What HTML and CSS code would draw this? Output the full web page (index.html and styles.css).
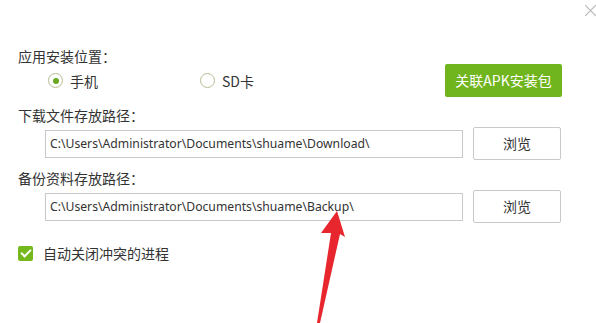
FILE: index.html
```html
<!DOCTYPE html>
<html>
<head>
<meta charset="utf-8">
<title>设置</title>
<link rel="stylesheet" href="styles.css">
</head>
<body>
<div class="dlg">
  <span class="close"></span>

  <div class="lbl lbl-first">应用安装位置：</div>
  <div class="radios">
    <span class="opt"><i class="radio on"></i>手机</span>
    <span class="opt"><i class="radio"></i>SD卡</span>
    <a class="btn-green">关联APK安装包</a>
  </div>

  <div class="lbl">下载文件存放路径：</div>
  <div class="pathrow">
    <div class="path">C:\Users\Administrator\Documents\shuame\Download\</div>
    <a class="btn">浏览</a>
  </div>

  <div class="lbl">备份资料存放路径：</div>
  <div class="pathrow">
    <div class="path">C:\Users\Administrator\Documents\shuame\Backup\</div>
    <a class="btn">浏览</a>
  </div>

  <div class="check"><i class="box"></i>自动关闭冲突的进程</div>

  <svg class="arrow" width="596" height="323" viewBox="0 0 596 323">
    <polygon points="337,211 345,237 340,234 320,323 317,323 331,233 321,233" fill="#e8262e"/>
  </svg>
</div>
</body>
</html>
```

FILE: styles.css
```css
*{
	margin:0;
	padding:0;}
body{
	background:#fff;
	font-family:"Noto Sans","Noto Sans CJK SC",sans-serif;
	color:#333;
	font-size:14px;}
	.dlg{
		position:relative;
		width:596px;
		height:323px;
		padding:0 34px 0 18px;
		box-sizing:border-box;
		overflow:hidden;}
		.close{
			position:absolute;
			right:-1px;
			top:5px;
			width:12px;
			height:12px;}
		.close:before,.close:after{
			content:"";
			position:absolute;
			left:5px;
			top:-2px;
			width:1px;
			height:15px;
			background:#b5b5b5;
			transform:rotate(45deg);}
		.close:after{
			transform:rotate(-45deg);}
	.lbl{
		line-height:16px;
		height:16px;
		margin-top:10px;
		font-family:"Noto Sans CJK SC",sans-serif;}
	.lbl-first{
		margin-top:48px;}
	.radios{
		display:flex;
		align-items:center;
		height:33px;
		padding-left:30px;}
		.opt{
			display:flex;
			align-items:center;
			width:152px;
			font-family:"Noto Sans CJK SC",sans-serif;}
		.radio{
			width:13px;
			height:13px;
			border:1px solid #b4bd92;
			border-radius:50%;
			margin-right:7px;
			position:relative;}
		.radio.on:after{
			content:"";
			position:absolute;
			left:3.5px;
			top:3.5px;
			width:6px;
			height:6px;
			border-radius:50%;
			background:#69a81e;}
		.btn-green{
			margin-left:auto;
			width:117px;
			height:33px;
			line-height:33px;
			text-align:center;
			background:#70b51d;
			color:#fff;
			font-size:14px;
			border-radius:2px;
			font-family:"Noto Sans CJK SC",sans-serif;}
	.pathrow{
		display:flex;
		align-items:center;
		height:33px;
		margin-top:4px;
		padding-left:27px;}
		.path{
			width:418px;
			height:28px;
			line-height:26px;
			box-sizing:border-box;
			border:1px solid #c9c9c9;
			padding-left:4px;
			font-size:12.2px;
			white-space:nowrap;
			overflow:hidden;}
		.btn{
			margin-left:10px;
			width:88px;
			height:33px;
			line-height:31px;
			box-sizing:border-box;
			border:1px solid #c9c9c9;
			border-radius:2px;
			text-align:center;
			font-family:"Noto Sans CJK SC",sans-serif;}
	.check{
		display:flex;
		align-items:center;
		margin-top:22px;
		height:16px;
		font-family:"Noto Sans CJK SC",sans-serif;}
		.box{
			width:15px;
			height:15px;
			border-radius:2px;
			background:#74b81c;
			margin-right:10px;
			position:relative;}
		.box:after{
			content:"";
			position:absolute;
			left:5px;
			top:1px;
			width:4px;
			height:8px;
			border:solid #fff;
			border-width:0 2px 2px 0;
			transform:rotate(45deg);}
	.arrow{
		position:absolute;
		left:0;
		top:0;}
```
